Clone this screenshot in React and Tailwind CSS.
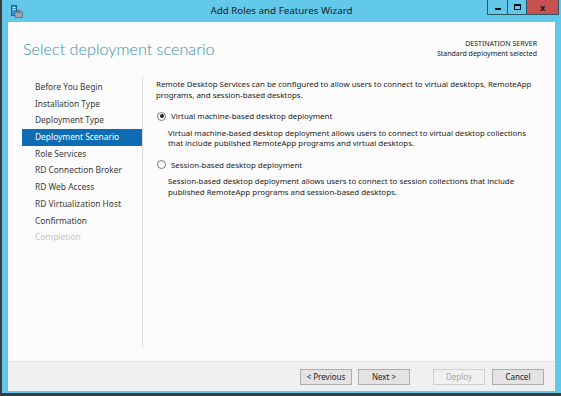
import React from 'react';

const navItems = [
    'Before You Begin',
    'Installation Type',
    'Deployment Type',
    'Deployment Scenario',
    'Role Services',
    'RD Connection Broker',
    'RD Web Access',
    'RD Virtualization Host',
    'Confirmation',
    'Completion',
];

const AppIcon = () => (
    <svg width="12" height="13" viewBox="0 0 12 13">
        <rect x="0.5" y="0.5" width="5" height="10" fill="#3d8fd6" stroke="#1f5f9c" />
        <rect x="1.5" y="2" width="3" height="1" fill="#bfe3ff" />
        <rect x="1.5" y="4" width="3" height="1" fill="#bfe3ff" />
        <rect x="4" y="7" width="7.5" height="5.5" fill="#9aa6b2" stroke="#5d6b78" strokeWidth="0.8" />
        <rect x="6.5" y="5.5" width="2.5" height="1.5" fill="none" stroke="#5d6b78" strokeWidth="0.8" />
    </svg>
);

const Radio = ({ checked }) => (
    <span className="w-[9px] h-[9px] rounded-full border border-[#7a7a7a] bg-white flex items-center justify-center shrink-0">
        {checked && <span className="w-[4px] h-[4px] rounded-full bg-[#222]" />}
    </span>
);

const Button = ({ children, disabled }) => (
    <button
        className={
            disabled
                ? 'w-[52px] h-[16px] border border-[#cfcfcf] bg-[#f0f0f0] text-[#a8a8a8] text-[8px] leading-none'
                : 'w-[52px] h-[16px] border border-[#adadad] bg-[#e3e3e3] text-[#222] text-[8px] leading-none'
        }
    >
        {children}
    </button>
);

export default function App() {
    return (
        <div
            className="w-[561px] h-[396px] bg-[#3c3c3c] pl-[2px] pb-[3px] overflow-hidden"
            style={{ fontFamily: '"Noto Sans", "Open Sans", sans-serif' }}
        >
            <div className="h-full bg-[#62c9ea] flex flex-col">
                {/* title bar */}
                <div className="h-[22px] grid grid-cols-[1fr_auto_1fr] shrink-0">
                    <div className="pl-[9px] pt-[5px]">
                        <AppIcon />
                    </div>
                    <div className="text-[9.8px] text-[#1b1b1b] leading-[22px]">Add Roles and Features Wizard</div>
                    <div className="flex justify-end pr-[2px]">
                        <div className="flex h-[15px] border border-[#2f5563] border-t-0">
                            <div className="w-[20px] flex items-center justify-center border-r border-[#2f5563]">
                                <span className="w-[6px] h-[2px] bg-[#111] mt-[3px]" />
                            </div>
                            <div className="w-[19px] flex items-center justify-center border-r border-[#2f5563]">
                                <span className="w-[7px] h-[6px] border border-[#111] border-t-2" />
                            </div>
                            <div className="w-[31px] bg-[#c75050] flex items-center justify-center text-[9px] font-bold text-[#1a1a1a] leading-none">
                                x
                            </div>
                        </div>
                    </div>
                </div>

                {/* client area */}
                <div className="flex-1 mx-[6px] mb-[2px] flex flex-col bg-[#fcfcfc]">
                    <div className="flex justify-between pl-[15px] pr-[18px] h-[55px]">
                        <h1
                            className="text-[16.2px] font-light text-[#3a8fae] leading-[24px] pt-[15px]"
                            style={{ fontFamily: 'Lato, "Noto Sans", sans-serif' }}
                        >
                            Select deployment scenario
                        </h1>
                        <div className="text-right pt-[17px] text-[7px] leading-[10px] text-[#222]">
                            <div>DESTINATION SERVER</div>
                            <div>Standard deployment selected</div>
                        </div>
                    </div>

                    <div className="flex-1 flex">
                        <div className="w-[134px] pl-[14px] pt-[2px]">
                            {navItems.map((item) => {
                                const active = item === 'Deployment Scenario';
                                const disabled = item === 'Completion';
                                return (
                                    <div
                                        key={item}
                                        className={
                                            active
                                                ? 'h-[16.7px] pl-[13px] flex items-center text-[8.4px] bg-[#0e6cb5] text-white'
                                                : disabled
                                                  ? 'h-[16.7px] pl-[13px] flex items-center text-[8.4px] text-[#c6c6c6]'
                                                  : 'h-[16.7px] pl-[13px] flex items-center text-[8.4px] text-[#3a3a3a]'
                                        }
                                    >
                                        {item}
                                    </div>
                                );
                            })}
                        </div>
                        <div className="w-px bg-[#d9d9d9] mb-[14px]" />
                        <div className="flex-1 pl-[13px] pt-[2px] text-[7.9px] leading-[10.5px] text-[#222]">
                            <p>
                                Remote Desktop Services can be configured to allow users to connect to virtual desktops, RemoteApp
                                <br />
                                programs, and session-based desktops.
                            </p>
                            <div className="flex items-center gap-[5px] mt-[11px] pl-[1px]">
                                <Radio checked />
                                <span>Virtual machine-based desktop deployment</span>
                            </div>
                            <p className="pl-[12px] mt-[6px]">
                                Virtual machine-based desktop deployment allows users to connect to virtual desktop collections
                                <br />
                                that include published RemoteApp programs and virtual desktops.
                            </p>
                            <div className="flex items-center gap-[5px] mt-[11px] pl-[1px]">
                                <Radio />
                                <span>Session-based desktop deployment</span>
                            </div>
                            <p className="pl-[12px] mt-[6px]">
                                Session-based desktop deployment allows users to connect to session collections that include
                                <br />
                                published RemoteApp programs and session-based desktops.
                            </p>
                        </div>
                    </div>

                    {/* footer */}
                    <div className="h-[30px] bg-[#f0f0f0] border-t border-[#dfdfdf] flex items-center justify-end pr-[11px]">
                        <div className="flex gap-[6px]">
                            <Button>&lt; Previous</Button>
                            <Button>Next &gt;</Button>
                        </div>
                        <div className="flex gap-[7px] ml-[23px]">
                            <Button disabled>Deploy</Button>
                            <Button>Cancel</Button>
                        </div>
                    </div>
                </div>
            </div>
        </div>
    );
}
